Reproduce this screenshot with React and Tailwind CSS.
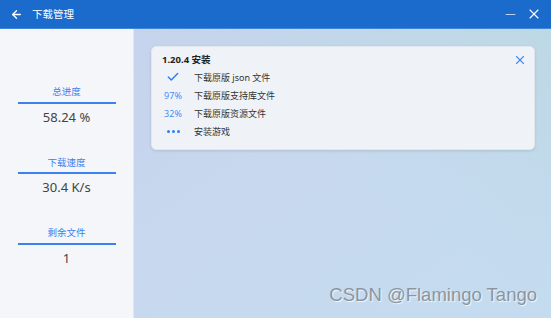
import { ArrowLeft, Minus, X, Check } from "lucide-react";

const stats = [
  { label: "总进度", value: "58.24 %" },
  { label: "下载速度", value: "30.4 K/s" },
  { label: "剩余文件", value: "1" },
];

const tasks = [
  { state: "done", name: "下载原版 json 文件" },
  { state: "97%", name: "下载原版支持库文件" },
  { state: "32%", name: "下载原版资源文件" },
  { state: "wait", name: "安装游戏" },
];

function App() {
  return (
    <div
      className="w-[551px] h-[318px] flex flex-col overflow-hidden"
      style={{ fontFamily: '"Noto Sans", "Noto Sans CJK SC", sans-serif' }}
    >
      {/* TITLE BAR */}
      <div className="h-[29px] bg-[#1a6bcc] flex items-center text-white shrink-0 border-b border-[#3f86d8]">
        <ArrowLeft size={13} strokeWidth={2.4} className="ml-[10px]" />
        <span className="ml-[9px] text-[10.5px] leading-none">下载管理</span>
        <div className="ml-auto flex items-center gap-[8px] mr-[9px]">
          <Minus size={15} strokeWidth={1.4} className="opacity-80" />
          <X size={16} strokeWidth={1.7} />
        </div>
      </div>

      <div className="flex flex-1">
        {/* SIDEBAR */}
        <div className="w-[134px] bg-[#f4f6f9] flex flex-col items-center pt-[58px] gap-[34px] border-r border-[#e3e8ef]">
          {stats.map((s, idx) => (
            <div key={idx} className="w-[98px] flex flex-col items-center">
              <span className="text-[9.5px] text-[#3b82f0] leading-none">{s.label}</span>
              <div className="w-full h-[2px] bg-[#3b82f0] mt-[5px]" />
              <span className="text-[13px] text-[#444] leading-none mt-[7px]">{s.value}</span>
            </div>
          ))}
        </div>

        {/* MAIN */}
        <div className="flex-1 relative bg-gradient-to-br from-[#c6d3ec] via-[#c7d9ef] to-[#c4dcf0] pl-[17px] pr-[16px] pt-[17px]">
          <div className="absolute inset-0 bg-gradient-to-tr from-transparent via-transparent to-[#b9d8e0] opacity-70" />
          <div className="relative bg-[#eff3f8] rounded-[5px] shadow-[0_1px_3px_rgba(0,0,0,0.12)] border border-[#e2e8f0] h-[104px] px-[10px] pt-[6px]">
            <div className="flex items-center">
              <span className="text-[9.5px] font-bold text-[#222]">1.20.4 安装</span>
              <X size={14} strokeWidth={2} className="ml-auto mr-[-3px] text-[#4a8cf5]" />
            </div>
            <div className="flex flex-col mt-[3px] gap-[4px]">
              {tasks.map((t, idx) => (
                <div key={idx} className="flex items-center h-[14px]">
                  <div className="w-[22px] flex justify-center text-[9px] text-[#4a8cf5] leading-none">
                    {t.state === "done" ? (
                      <Check size={14} strokeWidth={2.6} className="text-[#2f7ff5]" />
                    ) : t.state === "wait" ? (
                      <span className="flex gap-[2px]">
                        <span className="w-[3px] h-[3px] rounded-full bg-[#2f7ff5]" />
                        <span className="w-[3px] h-[3px] rounded-full bg-[#2f7ff5]" />
                        <span className="w-[3px] h-[3px] rounded-full bg-[#2f7ff5]" />
                      </span>
                    ) : (
                      t.state
                    )}
                  </div>
                  <span className="ml-[10px] text-[9px] text-[#333]">{t.name}</span>
                </div>
              ))}
            </div>
          </div>

          <div
            className="absolute right-[14px] bottom-[9px] text-[18.5px] text-[#8d959e]"
            style={{ fontFamily: '"Liberation Sans", sans-serif', textShadow: "1px 1px 1px rgba(255,255,255,0.8)" }}
          >
            CSDN @Flamingo Tango
          </div>
        </div>
      </div>
    </div>
  );
}

export default App;
